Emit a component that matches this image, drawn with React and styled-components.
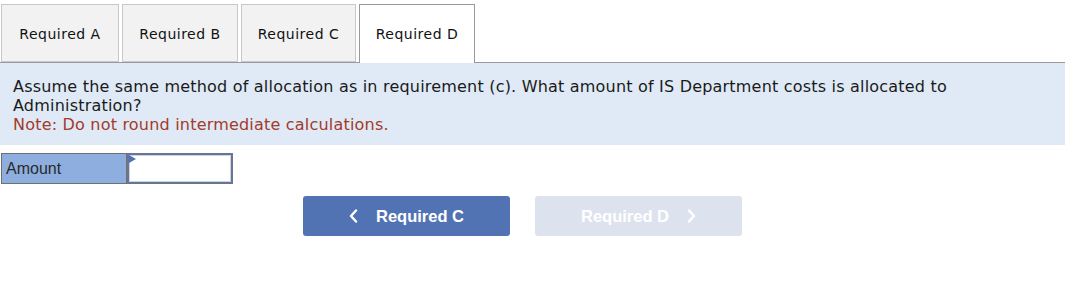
import styled, { createGlobalStyle } from "styled-components";

const GlobalStyle = createGlobalStyle`
  html, body {
    margin: 0;
    padding: 0;
    background: #ffffff;
  }
  body {
    font-family: "DejaVu Sans", Verdana, sans-serif;
  }
`;

const tabs = ["Required A", "Required B", "Required C", "Required D"];

const Page = styled.div`
  width: 1065px;
  padding-top: 4px;
`;

const TabBar = styled.div`
  display: flex;
  align-items: flex-end;
  gap: 3px;
  padding-left: 1px;
  border-bottom: 1px solid #9a9a9a;
  height: 58px;
`;

const Tab = styled.button`
  box-sizing: border-box;
  width: ${(p) => p.$w}px;
  height: ${(p) => (p.$active ? 59 : 58)}px;
  margin-bottom: ${(p) => (p.$active ? -1 : 0)}px;
  padding: ${(p) => (p.$active ? "0" : "2px 0 0")};
  border: 1px solid ${(p) => (p.$active ? "#999999" : "#c8c8c8")};
  border-bottom: ${(p) => (p.$active ? "none" : "1px solid #c8c8c8")};
  background: ${(p) => (p.$active ? "#ffffff" : "#f2f2f2")};
  font-family: "DejaVu Sans", Verdana, sans-serif;
  font-size: 14px;
  letter-spacing: 0.5px;
  color: #111;
  cursor: pointer;
`;

const Question = styled.div`
  background: #dfeaf6;
  padding: 14px 13px 11px 13px;
  font-size: 16px;
  letter-spacing: 0.2px;
  line-height: 19px;
  color: #1a1a1a;
`;

const Note = styled.div`
  color: #a33a2a;
`;

const AnswerRow = styled.div`
  display: flex;
  margin: 8px 0 0 1px;
  height: 31px;
`;

const Label = styled.div`
  box-sizing: border-box;
  width: 126px;
  border: 1px solid #707070;
  background: #8eaee0;
  font-family: "Liberation Sans", Arial, sans-serif;
  font-size: 16px;
  color: #2a2a2a;
  display: flex;
  align-items: center;
  padding-left: 4px;
`;

const InputWrap = styled.div`
  position: relative;
  width: 106px;
`;

const Input = styled.input`
  box-sizing: border-box;
  width: 100%;
  height: 100%;
  border: 2px solid #6a7590;
  box-shadow: inset 0 0 0 1px #c9d4ec;
  background: #fff;
  outline: none;
`;

const Marker = styled.span`
  position: absolute;
  left: 2px;
  top: 2px;
  width: 0;
  height: 0;
  border-top: 4px solid transparent;
  border-bottom: 4px solid transparent;
  border-left: 7px solid #4f72b8;
`;

const Nav = styled.div`
  display: flex;
  gap: 25px;
  margin: 12px 0 0 303px;
`;

const NavButton = styled.button`
  box-sizing: border-box;
  width: 207px;
  height: 40px;
  border: none;
  border-radius: 3px;
  background: ${(p) => (p.$disabled ? "#dce3ee" : "#5273b3")};
  color: #ffffff;
  font-family: "Liberation Sans", Arial, sans-serif;
  font-weight: 700;
  font-size: 16.5px;
  display: flex;
  align-items: center;
  justify-content: center;
  gap: 18px;
  cursor: ${(p) => (p.$disabled ? "default" : "pointer")};
`;

const Chevron = ({ dir }) => (
  <svg width="9" height="14" viewBox="0 0 9 14" fill="none">
    <path
      d={dir === "left" ? "M7 1.5 L2 7 L7 12.5" : "M2 1.5 L7 7 L2 12.5"}
      stroke="#ffffff"
      strokeWidth="2.4"
      strokeLinecap="round"
      strokeLinejoin="round"
    />
  </svg>
);

const widths = [118, 116, 115, 116];

export default function App() {
  return (
    <>
      <GlobalStyle />
      <Page>
        <TabBar>
          {tabs.map((t, i) => (
            <Tab key={t} $w={widths[i]} $active={i === 3}>
              {t}
            </Tab>
          ))}
        </TabBar>
        <Question>
          Assume the same method of allocation as in requirement (c). What amount of IS Department costs is allocated to Administration?
          <Note>Note: Do not round intermediate calculations.</Note>
        </Question>
        <AnswerRow>
          <Label>Amount</Label>
          <InputWrap>
            <Input type="text" />
            <Marker />
          </InputWrap>
        </AnswerRow>
        <Nav>
          <NavButton>
            <Chevron dir="left" />
            Required C
          </NavButton>
          <NavButton $disabled>
            Required D
            <Chevron dir="right" />
          </NavButton>
        </Nav>
      </Page>
    </>
  );
}
